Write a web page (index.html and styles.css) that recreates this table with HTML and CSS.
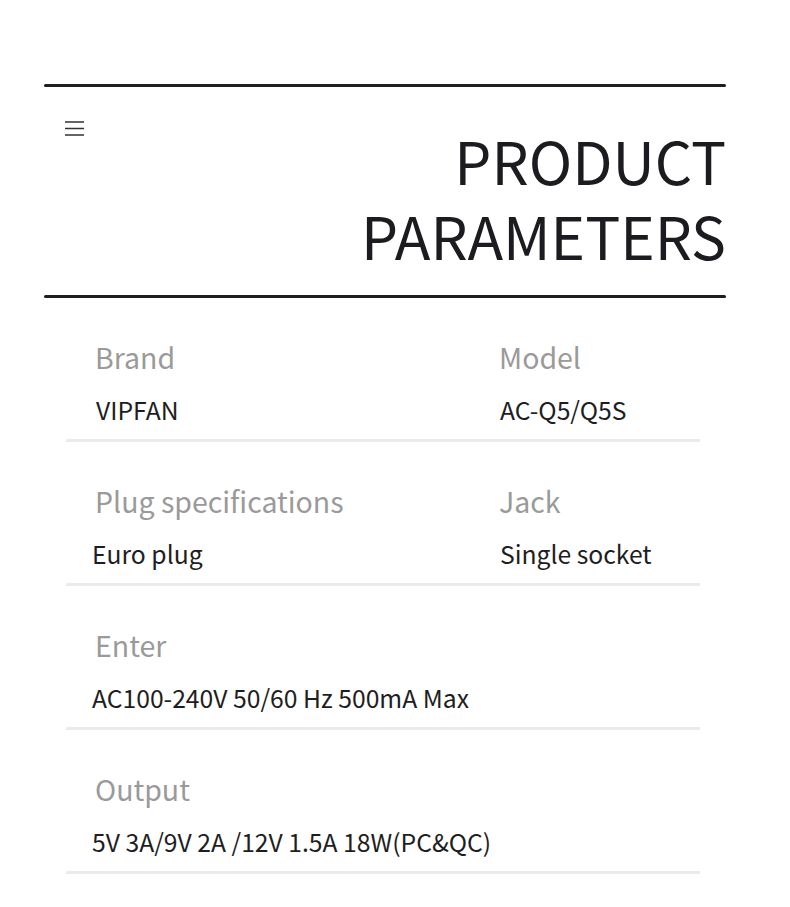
FILE: index.html
```html
<!DOCTYPE html>
<html lang="en">
<head>
<meta charset="utf-8">
<title>Product Parameters</title>
<link rel="stylesheet" href="styles.css">
</head>
<body>
<div class="page">
  <div class="rule"></div>
  <header class="header">
    <svg class="menu" width="20" height="15" viewBox="0 0 20 15" aria-hidden="true">
      <path d="M0 1H19M0 7.5H19M0 14H19" stroke="#333" stroke-width="1.6" fill="none"/>
    </svg>
    <h1 class="title">PRODUCT<br>PARAMETERS</h1>
  </header>
  <div class="rule"></div>
  <section class="params">
    <div class="row">
      <div class="cell">
        <div class="label">Brand</div>
        <div class="value">VIPFAN</div>
      </div>
      <div class="cell">
        <div class="label">Model</div>
        <div class="value">AC-Q5/Q5S</div>
      </div>
    </div>
    <div class="row">
      <div class="cell">
        <div class="label">Plug specifications</div>
        <div class="value value-shift">Euro plug</div>
      </div>
      <div class="cell">
        <div class="label">Jack</div>
        <div class="value">Single socket</div>
      </div>
    </div>
    <div class="row">
      <div class="cell wide">
        <div class="label">Enter</div>
        <div class="value value-shift">AC100-240V 50/60 Hz 500mA Max</div>
      </div>
    </div>
    <div class="row">
      <div class="cell wide">
        <div class="label">Output</div>
        <div class="value value-shift">5V 3A/9V 2A /12V 1.5A 18W(PC&amp;QC)</div>
      </div>
    </div>
  </section>
</div>
</body>
</html>
```

FILE: styles.css
```css
html, body {
  margin: 0;
  padding: 0;
  background: #ffffff;
}

body {
  font-family: "Noto Sans CJK SC", "Noto Sans", sans-serif;
  color: #1e1e22;
}

.page {
  padding-top: 84px;
  width: 682px;
  margin-left: 44px;
}

.rule {
  height: 3px;
  background: #1f1f23;
  border-radius: 2px;
}

.header {
  display: flex;
  justify-content: space-between;
  align-items: flex-start;
  padding-top: 34px;
  padding-bottom: 23px;
}

.menu {
  display: block;
  margin-left: 21px;
}

.title {
  margin: 1px 0 0 0;
  font-weight: 400;
  font-size: 58.6px;
  line-height: 75px;
  text-align: right;
  color: #1c1c20;
}

.params {
  width: 634px;
  margin-left: 22px;
}

.row {
  display: grid;
  grid-template-columns: 433px 1fr;
  padding-top: 39px;
  padding-bottom: 13px;
  border-bottom: 3px solid #ebebeb;
}

.cell {
  padding-left: 29px;
}

.cell + .cell {
  padding-left: 0;
}

.cell.wide {
  grid-column: 1 / -1;
}

.label {
  font-size: 28.5px;
  line-height: 40px;
  color: #9a9a9a;
}

.value {
  margin-top: 15px;
  padding-left: 1px;
  font-size: 24.7px;
  line-height: 34px;
  color: #1e1e22;
}

.value-shift {
  margin-left: -4px;
}
```
